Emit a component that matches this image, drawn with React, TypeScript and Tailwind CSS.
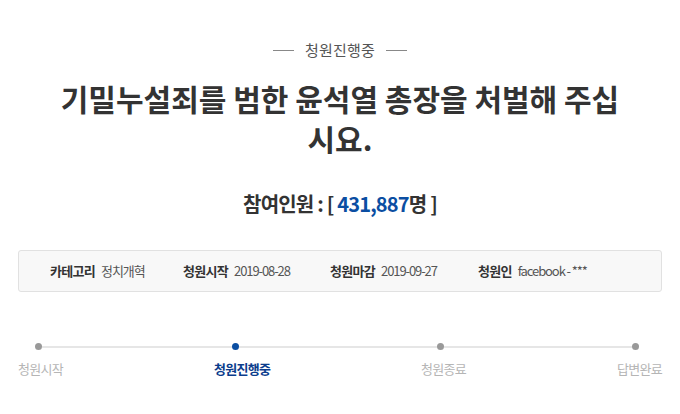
const FONT = "font-['Noto_Sans_CJK_KR','Noto_Sans',sans-serif]";

type Info = { label: string; value: string; width: string };

const infos: Info[] = [
  { label: '카테고리', value: '정치개혁', width: 'w-[133px]' },
  { label: '청원시작', value: '2019-08-28', width: 'w-[147px]' },
  { label: '청원마감', value: '2019-09-27', width: 'w-[148px]' },
  { label: '청원인', value: 'facebook - ***', width: 'w-[150px]' },
];

const steps = ['청원시작', '청원진행중', '청원종료', '답변완료'];

export default function App() {
  return (
    <div className={`${FONT} w-[680px] h-[414px] bg-white text-[#333] overflow-hidden`}>
      <div className="pt-[40px] flex items-center justify-center gap-[11px] text-[15px] leading-[20px] text-[#555]">
        <span className="w-[21px] h-px bg-[#888]" />
        <span className="tracking-[0.2px]">청원진행중</span>
        <span className="w-[21px] h-px bg-[#888]" />
      </div>

      <h1 className="mt-[18px] text-center text-[30px] leading-[40px] font-bold text-[#333]">
        <span className="block">기밀누설죄를 범한 윤석열 총장을 처벌해 주십</span>
        <span className="block">시요.</span>
      </h1>

      <div className="mt-[32px] text-center text-[20px] leading-[28px] font-bold tracking-[-0.8px]">
        참여인원 : [ <span className="text-[#0b4ea2]">431,887</span>명 ]
      </div>

      <div className="mx-[18px] mt-[32px] h-[42px] bg-[#f8f8f8] border border-[#e1e1e1] rounded-[3px] flex items-center pl-[31px] text-[13px]">
        {infos.map((i) => (
          <div key={i.label} className={`${i.width} flex items-center gap-[6px]`}>
            <span className="font-bold text-[#333] tracking-[-0.7px]">{i.label}</span>
            <span className="text-[#555] tracking-[-1.1px]">{i.value}</span>
          </div>
        ))}
      </div>

      <div className="mt-[51px] flex items-center pl-[35px]">
        <span className="w-[7px] h-[7px] rounded-full bg-[#999]" />
        <span className="w-[190px] h-[2px] bg-[#e6e6e6]" />
        <span className="w-[7px] h-[7px] rounded-full bg-[#0b4ea2]" />
        <span className="w-[198px] h-[2px] bg-[#e6e6e6]" />
        <span className="w-[7px] h-[7px] rounded-full bg-[#999]" />
        <span className="w-[188px] h-[2px] bg-[#e6e6e6]" />
        <span className="w-[7px] h-[7px] rounded-full bg-[#999]" />
      </div>

      <div className="mt-[9px] mx-[18px] flex justify-between text-[13px] leading-[20px] tracking-[-0.7px]">
        {steps.map((s, idx) => (
          <span
            key={s}
            className={idx === 1 ? 'font-bold text-[#0b3d8c]' : 'text-[#b5b5b5]'}
          >
            {s}
          </span>
        ))}
      </div>
    </div>
  );
}
